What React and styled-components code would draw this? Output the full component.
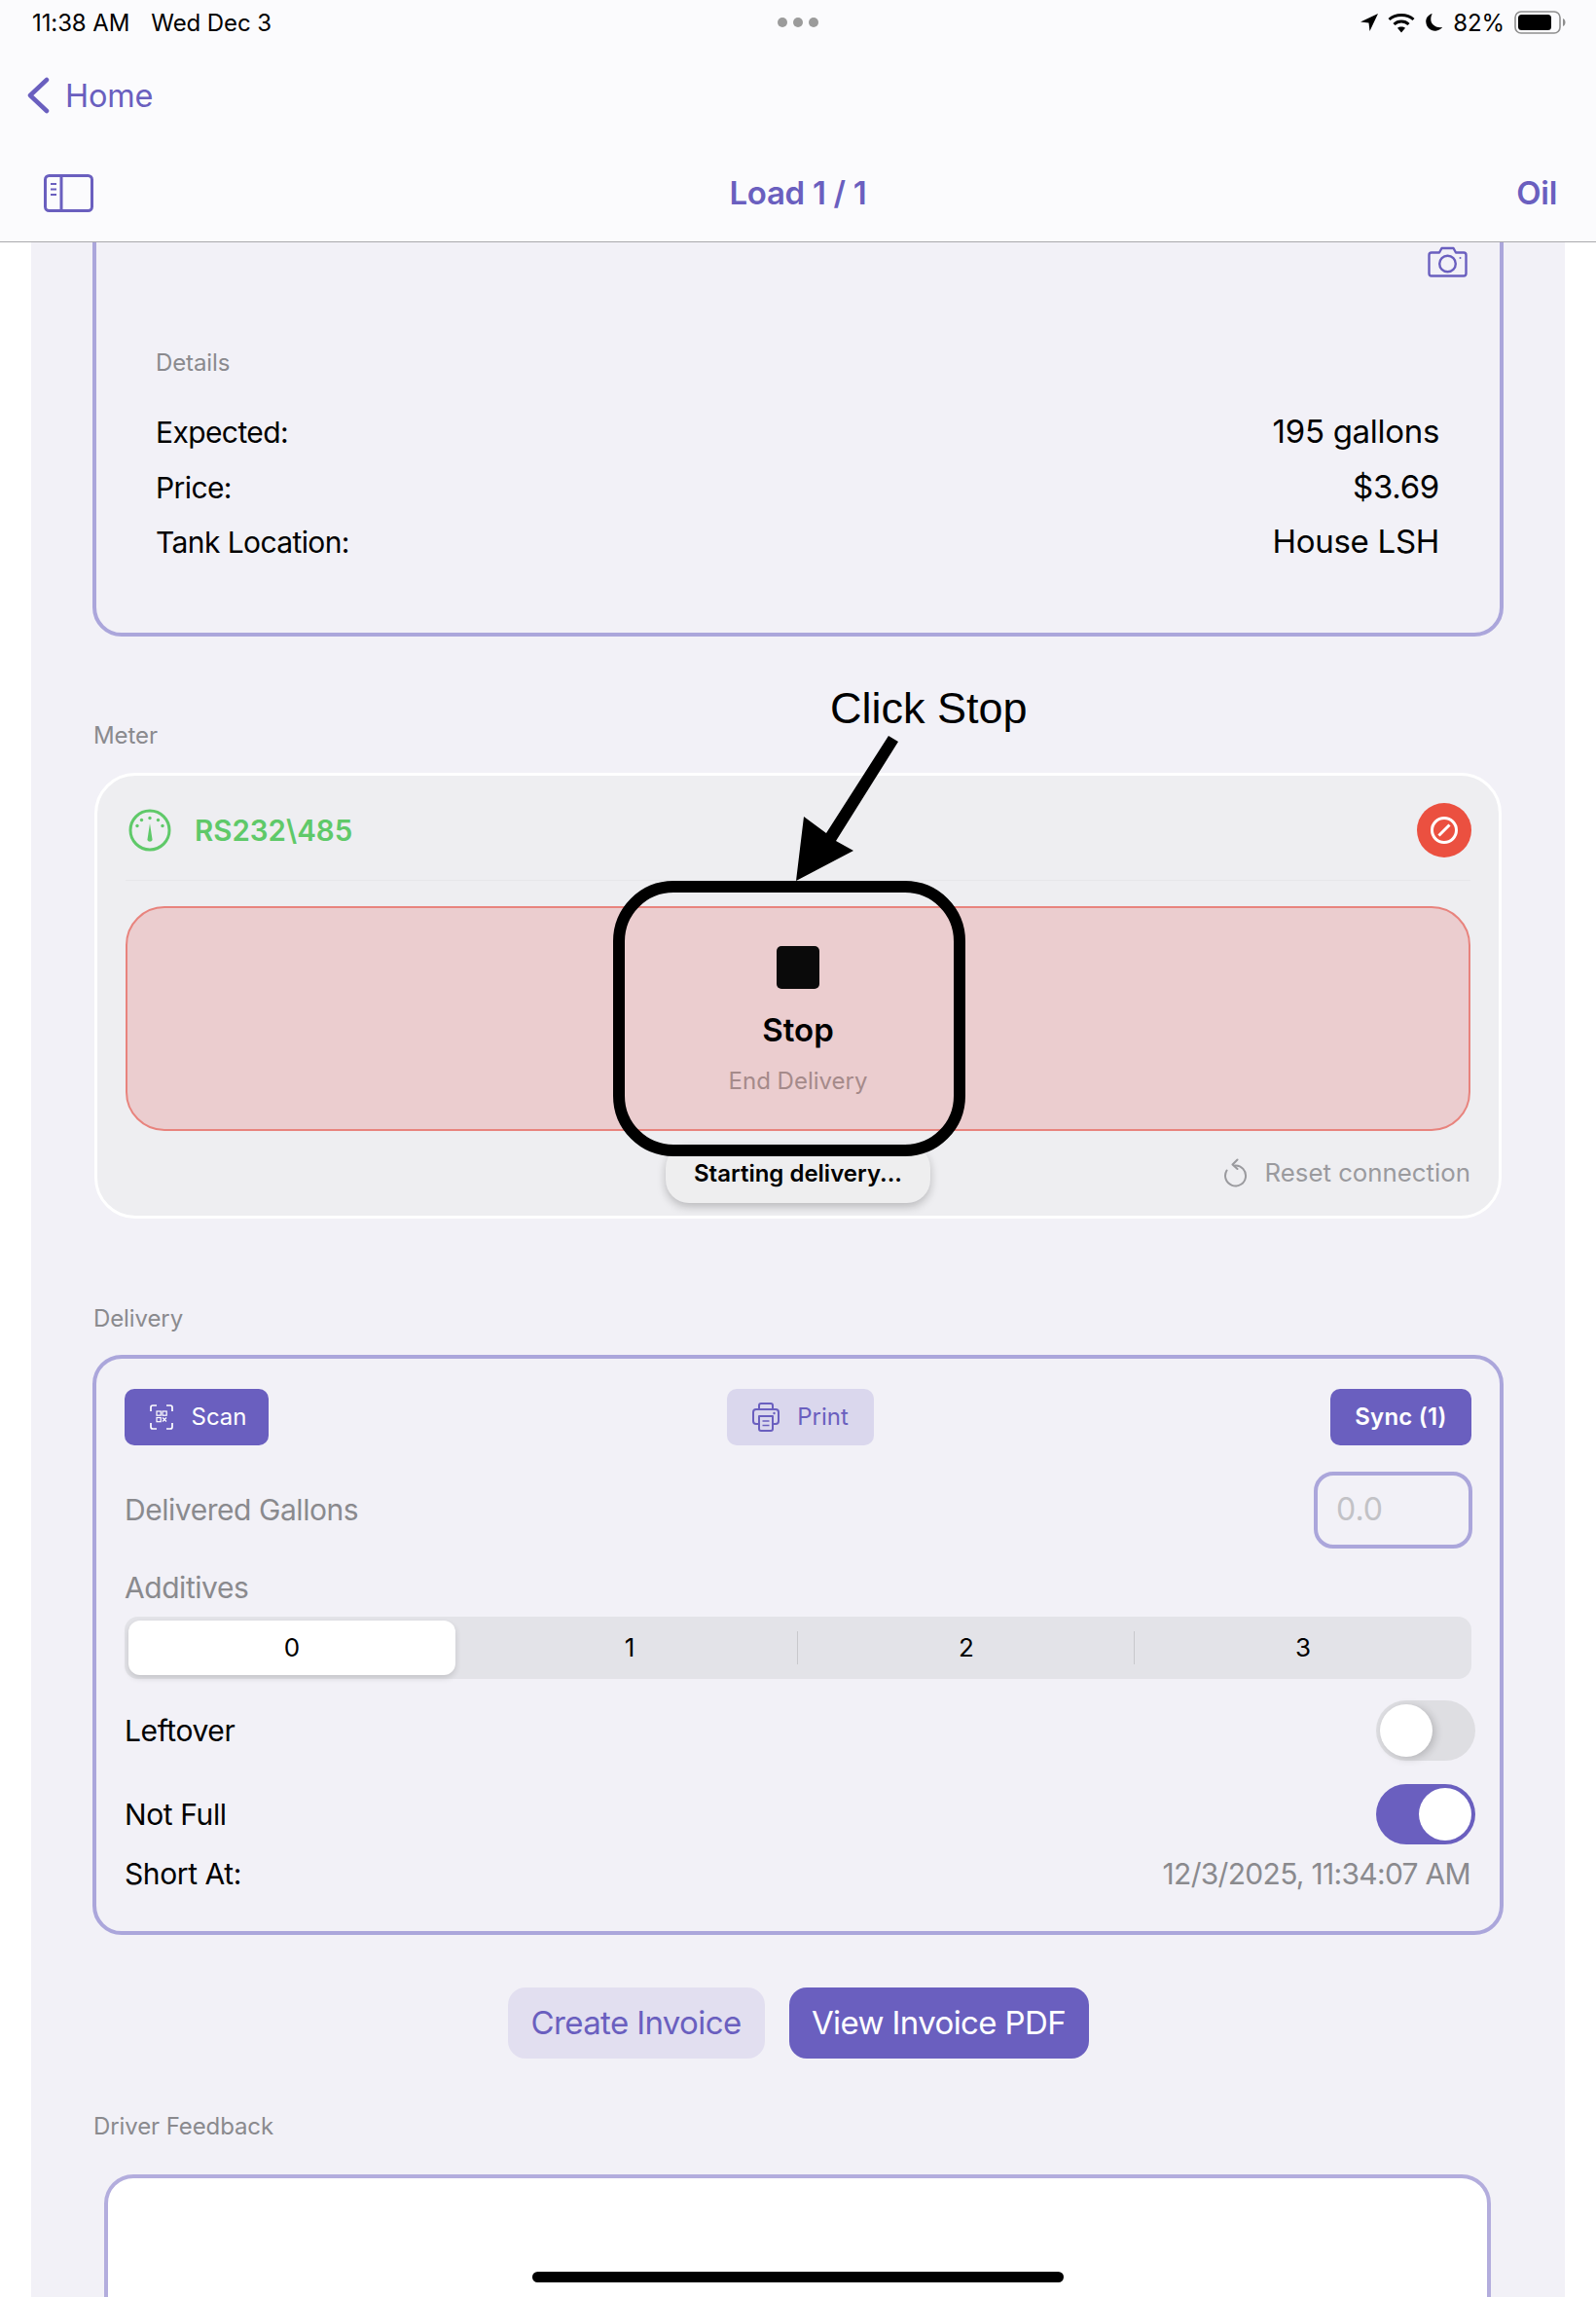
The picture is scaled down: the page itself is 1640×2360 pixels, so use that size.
import React from 'react';
import styled, { createGlobalStyle } from 'styled-components';

const purple = '#6a5fbf';
const lilac = '#aba6db';
const gray = '#8a8a8e';
const green = '#5fc969';

const GlobalStyle = createGlobalStyle`
  html, body {
    margin: 0;
    padding: 0;
    background: #fff;
    font-family: Inter, "Noto Sans", "Liberation Sans", sans-serif;
    color: #000;
  }
  * { box-sizing: border-box; }
`;

const Page = styled.div`
  position: relative;
  width: 1640px;
  height: 2360px;
  overflow: hidden;
  background: #fff;
`;

const Header = styled.header`
  position: relative;
  z-index: 2;
  height: 249px;
  padding: 0 40px 0 33px;
  background: #fbfbfd;
  border-bottom: 1px solid #a9a9ac;
`;

const StatusBar = styled.div`
  display: grid;
  grid-template-columns: 1fr auto 1fr;
  align-items: center;
  height: 46px;
  font-size: 24px;
  letter-spacing: -0.1px;
`;

const StatusLeft = styled.div`
  display: flex;
  gap: 22px;
`;

const Dots = styled.div`
  display: flex;
  gap: 6px;
  margin-left: 6px;
  span {
    width: 10px;
    height: 10px;
    border-radius: 50%;
    background: #9b9b9b;
  }
`;

const StatusRight = styled.div`
  display: flex;
  align-items: center;
  justify-content: flex-end;
  gap: 10px;
  margin-right: -10px;
`;

const BackRow = styled.div`
  display: flex;
  align-items: center;
  gap: 16px;
  height: 50px;
  margin-top: 27px;
  margin-left: -6px;
  font-size: 32.5px;
  color: ${purple};
  letter-spacing: -0.2px;
`;

const TitleRow = styled.div`
  display: grid;
  grid-template-columns: 1fr auto 1fr;
  align-items: center;
  height: 50px;
  margin-top: 50px;
  padding-left: 7px;
  color: ${purple};
  font-size: 33px;
  font-weight: 600;
  letter-spacing: -0.3px;
  svg {
    margin-left: 5px;
  }
`;

const TitleRight = styled.div`
  justify-self: end;
`;

const Column = styled.main`
  display: flow-root;
  margin: 0 32px;
  height: 2112px;
  padding: 0 64px;
  background: #f2f1f7;
`;

const DetailsCard = styled.section`
  margin: -41px -1px 0;
  padding: 42px 62px 64px 61px;
  border: 4px solid ${lilac};
  border-radius: 30px;
`;

const CameraRow = styled.div`
  display: flex;
  justify-content: flex-end;
  height: 31px;
  margin-top: -1px;
  margin-bottom: 1px;
  margin-right: -29px;
`;

const SmallLabel = styled.div`
  height: 30px;
  line-height: 30px;
  font-size: 24px;
  color: ${gray};
  letter-spacing: -0.1px;
`;

const DetailsLabel = styled(SmallLabel)`
  margin-top: 74px;
`;

const DetailRows = styled.div`
  margin-top: 28px;
`;

const DetailRow = styled.div`
  display: flex;
  justify-content: space-between;
  align-items: center;
  height: 56.5px;
  font-size: 30px;
  letter-spacing: -0.6px;
`;

const DetailValue = styled.span`
  margin-top: -2px;
  font-size: 33px;
  letter-spacing: -0.3px;
`;

const SectionLabel = styled(SmallLabel)`
  margin-top: ${p => p.$top}px;
  margin-bottom: ${p => p.$bottom}px;
`;

const MeterCard = styled.section`
  position: relative;
  height: 458px;
  margin: 0 1px;
  padding: 0 29px;
  background: #eeeef1;
  border: 3px solid #fff;
  border-radius: 42px;
`;

const MeterHeader = styled.div`
  display: flex;
  align-items: center;
  height: 108px;
  padding-top: 6px;
  border-bottom: 1px solid #e6e6e9;
  > svg {
    margin-left: 3px;
  }
`;

const MeterName = styled.div`
  flex: 1;
  margin-left: 24px;
  font-size: 29.5px;
  font-weight: 600;
  color: ${green};
`;

const BlockBadge = styled.div`
  display: flex;
  align-items: center;
  justify-content: center;
  width: 56px;
  height: 56px;
  margin-right: -1px;
  border-radius: 50%;
  background: #eb5040;
`;

const StopButton = styled.button`
  display: flex;
  flex-direction: column;
  align-items: center;
  width: 100%;
  height: 231px;
  margin-top: 26px;
  padding: 39px 0 0;
  font-family: inherit;
  background: #ebcdcf;
  border: 2px solid #e8837d;
  border-radius: 40px;
`;

const StopSquare = styled.div`
  width: 44px;
  height: 44px;
  border-radius: 5px;
  background: #0a0a0a;
`;

const StopTitle = styled.div`
  margin-top: 21px;
  font-size: 33px;
  line-height: 42px;
  font-weight: 600;
  color: #000;
`;

const StopHint = styled.div`
  margin-top: 16px;
  font-size: 24px;
  line-height: 32px;
  color: #a58a8a;
`;

const MeterFooter = styled.div`
  display: flex;
  align-items: center;
  justify-content: flex-end;
  gap: 17px;
  height: 86px;
  font-size: 25.8px;
  color: #9a9a9e;
`;

const Toast = styled.div`
  position: absolute;
  left: 584px;
  bottom: 13px;
  display: flex;
  align-items: center;
  justify-content: center;
  width: 272px;
  height: 60px;
  font-size: 24px;
  font-weight: 600;
  background: #eeeeef;
  border-radius: 24px;
  box-shadow: 0 4px 10px rgba(0, 0, 0, 0.22);
`;

const DeliveryCard = styled.section`
  height: 596px;
  margin: 0 -1px;
  padding: 31px 29px 0;
  border: 4px solid ${lilac};
  border-radius: 30px;
`;

const Toolbar = styled.div`
  display: flex;
  justify-content: space-between;
  align-items: center;
  height: 58px;
`;

const ToolButton = styled.button`
  display: flex;
  align-items: center;
  justify-content: center;
  gap: ${p => p.$gap || 18}px;
  width: ${p => p.$width}px;
  height: 58px;
  margin-left: ${p => (p.$soft ? 2 : 0)}px;
  padding: 0 0 0 ${p => p.$inset || 0}px;
  font-family: inherit;
  font-size: 24px;
  font-weight: ${p => (p.$bold ? 600 : 400)};
  letter-spacing: ${p => (p.$bold ? 0.2 : 0)}px;
  color: ${p => (p.$soft ? purple : '#fff')};
  background: ${p => (p.$soft ? '#dad7ed' : purple)};
  border: 0;
  border-radius: 10px;
`;

const GallonsRow = styled.div`
  display: flex;
  justify-content: space-between;
  align-items: center;
  margin-top: 27px;
  margin-right: -1px;
`;

const MutedLabel = styled.div`
  font-size: 30px;
  line-height: 36px;
  color: ${gray};
  letter-spacing: -0.45px;
`;

const GallonsInput = styled.div`
  width: 163px;
  height: 79px;
  padding-left: 19px;
  line-height: 70px;
  font-size: 32px;
  color: #c2c2c6;
  border: 4px solid ${lilac};
  border-radius: 20px;
`;

const AdditivesLabel = styled(MutedLabel)`
  margin-top: 22px;
`;

const Segments = styled.div`
  display: grid;
  grid-template-columns: repeat(4, 1fr);
  height: 64px;
  margin-top: 12px;
  background: #e3e3e8;
  border-radius: 14px;
`;

const Segment = styled.div`
  position: relative;
  display: flex;
  align-items: center;
  justify-content: center;
  font-size: 26px;
  ${p => p.$divider && `
    &::after {
      content: '';
      position: absolute;
      right: 0;
      top: 15px;
      bottom: 15px;
      width: 1px;
      background: #c8c8cc;
    }
  `}
  ${p => p.$active && `
    margin: 4px 6px 4px 4px;
    background: #fff;
    border-radius: 12px;
    box-shadow: 0 3px 6px rgba(0, 0, 0, 0.14);
  `}
`;

const ToggleRow = styled.div`
  display: flex;
  justify-content: space-between;
  align-items: center;
  height: 62px;
  margin-top: ${p => p.$top}px;
  margin-right: -4px;
  font-size: 30px;
  letter-spacing: -0.4px;
`;

const Toggle = styled.div`
  display: flex;
  justify-content: ${p => (p.$on ? 'flex-end' : 'flex-start')};
  align-items: center;
  width: 102px;
  height: 62px;
  padding: 0 4px;
  border-radius: 31px;
  background: ${p => (p.$on ? purple : '#dedee2')};
  span {
    width: 54px;
    height: 54px;
    border-radius: 50%;
    background: #fff;
    box-shadow: ${p => (p.$on ? 'none' : '3px 2px 8px rgba(0, 0, 0, 0.18)')};
  }
`;

const ShortRow = styled.div`
  display: flex;
  justify-content: space-between;
  align-items: center;
  height: 36px;
  margin-top: 12px;
  font-size: 30px;
  letter-spacing: -0.4px;
  span {
    margin-right: 1px;
    color: ${gray};
    letter-spacing: -0.7px;
  }
`;

const InvoiceRow = styled.div`
  display: flex;
  justify-content: center;
  gap: 25px;
  margin-top: 54px;
`;

const InvoiceButton = styled.button`
  width: ${p => p.$width}px;
  height: 73px;
  padding: 0;
  font-family: inherit;
  font-size: 33px;
  letter-spacing: -0.62px;
  color: ${p => (p.$soft ? purple : '#fff')};
  background: ${p => (p.$soft ? '#e2dff0' : purple)};
  border: 0;
  border-radius: 18px;
`;

const FeedbackBox = styled.div`
  height: 200px;
  margin: 0 12px 0 11px;
  background: #fff;
  border: 4px solid #b3addd;
  border-radius: 30px;
`;

const Annotation = styled.svg`
  position: absolute;
  left: 0;
  top: 0;
  z-index: 1;
  pointer-events: none;
`;

const ClickStop = styled.div`
  position: absolute;
  left: 853px;
  top: 701px;
  z-index: 1;
  font-family: "Liberation Sans", Arial, sans-serif;
  font-size: 45px;
  line-height: 54px;
  white-space: nowrap;
`;

const HomeIndicator = styled.div`
  position: absolute;
  left: 547px;
  bottom: 15px;
  z-index: 3;
  width: 546px;
  height: 11px;
  border-radius: 6px;
  background: #000;
`;

const Chevron = () => (
  <svg width="24" height="38" viewBox="0 0 24 38" fill="none" stroke={purple} strokeWidth="4.5" strokeLinecap="round" strokeLinejoin="round">
    <path d="M21 3 L4 19 L21 35" />
  </svg>
);

const SidebarIcon = () => (
  <svg width="51" height="39" viewBox="0 0 51 39" fill="none" stroke={purple} strokeWidth="3">
    <rect x="1.5" y="1.5" width="48" height="36" rx="4" />
    <path d="M18 2 V37" />
    <path d="M7 10 H13 M7 15.5 H13 M7 21 H13" strokeWidth="2" />
  </svg>
);

const LocationIcon = () => (
  <svg width="18" height="18" viewBox="0 0 18 18" fill="#000">
    <path d="M18 0 L0 8.5 L8.5 9.5 L9.5 18 Z" />
  </svg>
);

const WifiIcon = () => (
  <svg width="28" height="21" viewBox="0 0 28 21" fill="none" stroke="#000" strokeWidth="3">
    <path d="M1.5 7 C8 1 20 1 26.5 7" />
    <path d="M6.5 12 C10.5 8 17.5 8 21.5 12" />
    <path d="M14 20.5 L10 15.8 C12 14 16 14 18 15.8 Z" fill="#000" stroke="none" />
  </svg>
);

const MoonIcon = () => (
  <svg width="19" height="20" viewBox="0 0 20 22" fill="#000">
    <path d="M8 1 C3 2.5 0.5 6.5 1 11 C1.5 17 6.5 21 12 20.5 C15 20.2 17.5 19 19.5 16.5 C13 17.5 7 14 6.5 8.5 C6.3 5.5 7 3 8 1 Z" />
  </svg>
);

const BatteryIcon = () => (
  <svg width="54" height="24" viewBox="0 0 54 24">
    <rect x="1" y="1" width="46" height="22" rx="6" fill="none" stroke="#8e8e8e" strokeWidth="1.6" />
    <rect x="4" y="4" width="34" height="16" rx="3.5" fill="#000" />
    <path d="M50 8 C52 9 52.5 10.5 52.5 12 C52.5 13.5 52 15 50 16 Z" fill="#8e8e8e" />
  </svg>
);

const CameraIcon = () => (
  <svg width="41" height="32" viewBox="0 0 41 32" fill="none" stroke={purple} strokeWidth="2.4" strokeLinejoin="round">
    <path d="M4 6.5 H12 L14.5 2 H26.5 L29 6.5 H37 C38.5 6.5 39.5 7.5 39.5 9 V28 C39.5 29.5 38.5 30.5 37 30.5 H4 C2.5 30.5 1.5 29.5 1.5 28 V9 C1.5 7.5 2.5 6.5 4 6.5 Z" />
    <circle cx="20.5" cy="18" r="8.3" />
    <circle cx="33.5" cy="12" r="1" fill={purple} stroke="none" />
  </svg>
);

const GaugeIcon = () => (
  <svg width="44" height="44" viewBox="0 0 44 44" fill="none" stroke={green} strokeWidth="3">
    <circle cx="22" cy="22" r="20" />
    <path d="M22 15 L24.6 32 A2.8 2.8 0 0 1 19.4 32 Z" fill={green} stroke="none" />
    <g fill={green} stroke="none">
      <circle cx="22" cy="9.5" r="1.7" />
      <circle cx="13.5" cy="11.5" r="1.7" />
      <circle cx="30.5" cy="11.5" r="1.7" />
      <circle cx="9" cy="17.5" r="1.7" />
      <circle cx="35" cy="17.5" r="1.7" />
    </g>
  </svg>
);

const BlockIcon = () => (
  <svg width="30" height="30" viewBox="0 0 30 30" fill="none" stroke="#fff" strokeWidth="3">
    <circle cx="15" cy="15" r="12.5" />
    <path d="M9.5 20.5 L20.5 9.5" />
  </svg>
);

const ResetIcon = () => (
  <svg width="25" height="30" viewBox="0 0 25 30" fill="none" stroke="#9a9a9e" strokeWidth="2" strokeLinecap="round" strokeLinejoin="round">
    <path d="M11 7.5 A10.5 10.5 0 1 1 2.6 12.5" />
    <path d="M13.5 1.5 L8.5 6.5 L13.5 11" />
  </svg>
);

const ScanIcon = () => (
  <svg width="24" height="26" viewBox="0 0 24 26" fill="none" stroke="#fff" strokeWidth="1.7">
    <path d="M7 1 H3 C1.8 1 1 1.8 1 3 V7 M17 1 H21 C22.2 1 23 1.8 23 3 V7 M7 25 H3 C1.8 25 1 24.2 1 23 V19 M17 25 H21 C22.2 25 23 24.2 23 23 V19" />
    <rect x="7" y="7" width="4.2" height="4.2" strokeWidth="1.2" />
    <rect x="13" y="7" width="4.2" height="4.2" strokeWidth="1.2" />
    <rect x="7" y="13.5" width="4.2" height="4.2" strokeWidth="1.2" />
    <path d="M13 13.5 L17 17.5 M17 13.5 L13 17.5" strokeWidth="1.2" />
  </svg>
);

const PrintIcon = () => (
  <svg width="28" height="30" viewBox="0 0 28 30" fill="none" stroke={purple} strokeWidth="2" strokeLinejoin="round">
    <path d="M7 7 V3 C7 2 8 1 9 1 H19 C20 1 21 2 21 3 V7" />
    <path d="M7 22 H4 C2.5 22 1 21 1 19 V10 C1 8 2.5 7 4 7 H24 C25.5 7 27 8 27 10 V19 C27 21 25.5 22 24 22 H21" />
    <path d="M7 14 H21 V27 C21 28 20 29 19 29 H9 C8 29 7 28 7 27 Z" />
    <path d="M10.5 19 H17.5 M10.5 23.5 H17.5" strokeWidth="1.6" />
    <circle cx="22.5" cy="11" r="1.2" fill={purple} stroke="none" />
  </svg>
);

const App = () => (
  <Page>
    <GlobalStyle />
    <Header>
      <StatusBar>
        <StatusLeft>
          <span>11:38 AM</span>
          <span>Wed Dec 3</span>
        </StatusLeft>
        <Dots>
          <span />
          <span />
          <span />
        </Dots>
        <StatusRight>
          <LocationIcon />
          <WifiIcon />
          <MoonIcon />
          <span>82%</span>
          <BatteryIcon />
        </StatusRight>
      </StatusBar>
      <BackRow>
        <Chevron />
        Home
      </BackRow>
      <TitleRow>
        <SidebarIcon />
        <span>Load 1 / 1</span>
        <TitleRight>Oil</TitleRight>
      </TitleRow>
    </Header>

    <Column>
      <DetailsCard>
        <CameraRow>
          <CameraIcon />
        </CameraRow>
        <DetailsLabel>Details</DetailsLabel>
        <DetailRows>
          <DetailRow>
            <span>Expected:</span>
            <DetailValue>195 gallons</DetailValue>
          </DetailRow>
          <DetailRow>
            <span>Price:</span>
            <DetailValue>$3.69</DetailValue>
          </DetailRow>
          <DetailRow>
            <span>Tank Location:</span>
            <DetailValue>House LSH</DetailValue>
          </DetailRow>
        </DetailRows>
      </DetailsCard>

      <SectionLabel $top={87} $bottom={23}>Meter</SectionLabel>
      <MeterCard>
        <MeterHeader>
          <GaugeIcon />
          <MeterName>RS232\485</MeterName>
          <BlockBadge>
            <BlockIcon />
          </BlockBadge>
        </MeterHeader>
        <StopButton>
          <StopSquare />
          <StopTitle>Stop</StopTitle>
          <StopHint>End Delivery</StopHint>
        </StopButton>
        <MeterFooter>
          <ResetIcon />
          <span>Reset connection</span>
        </MeterFooter>
        <Toast>Starting delivery...</Toast>
      </MeterCard>

      <SectionLabel $top={88} $bottom={22}>Delivery</SectionLabel>
      <DeliveryCard>
        <Toolbar>
          <ToolButton $width={148} $inset={3} $gap={19}>
            <ScanIcon />
            Scan
          </ToolButton>
          <ToolButton $width={151} $soft>
            <PrintIcon />
            Print
          </ToolButton>
          <ToolButton $width={145} $bold>Sync (1)</ToolButton>
        </Toolbar>
        <GallonsRow>
          <MutedLabel>Delivered Gallons</MutedLabel>
          <GallonsInput>0.0</GallonsInput>
        </GallonsRow>
        <AdditivesLabel>Additives</AdditivesLabel>
        <Segments>
          <Segment $active>0</Segment>
          <Segment $divider>1</Segment>
          <Segment $divider>2</Segment>
          <Segment>3</Segment>
        </Segments>
        <ToggleRow $top={22}>
          <span>Leftover</span>
          <Toggle><span /></Toggle>
        </ToggleRow>
        <ToggleRow $top={24}>
          <span>Not Full</span>
          <Toggle $on><span /></Toggle>
        </ToggleRow>
        <ShortRow>
          Short At:
          <span>12/3/2025, 11:34:07 AM</span>
        </ShortRow>
      </DeliveryCard>

      <InvoiceRow>
        <InvoiceButton $width={264} $soft>Create Invoice</InvoiceButton>
        <InvoiceButton $width={308}>View Invoice PDF</InvoiceButton>
      </InvoiceRow>

      <SectionLabel $top={55} $bottom={34}>Driver Feedback</SectionLabel>
      <FeedbackBox />
    </Column>

    <ClickStop>Click Stop</ClickStop>
    <Annotation width="1640" height="2360" viewBox="0 0 1640 2360">
      <rect x="636" y="911" width="350" height="271" rx="56" fill="none" stroke="#000" strokeWidth="12" />
      <path d="M826 839 L849 856 L913 756 L923 762 L859 864 L877 874 L818 905 Z" fill="#000" />
    </Annotation>
    <HomeIndicator />
  </Page>
);

export default App;
